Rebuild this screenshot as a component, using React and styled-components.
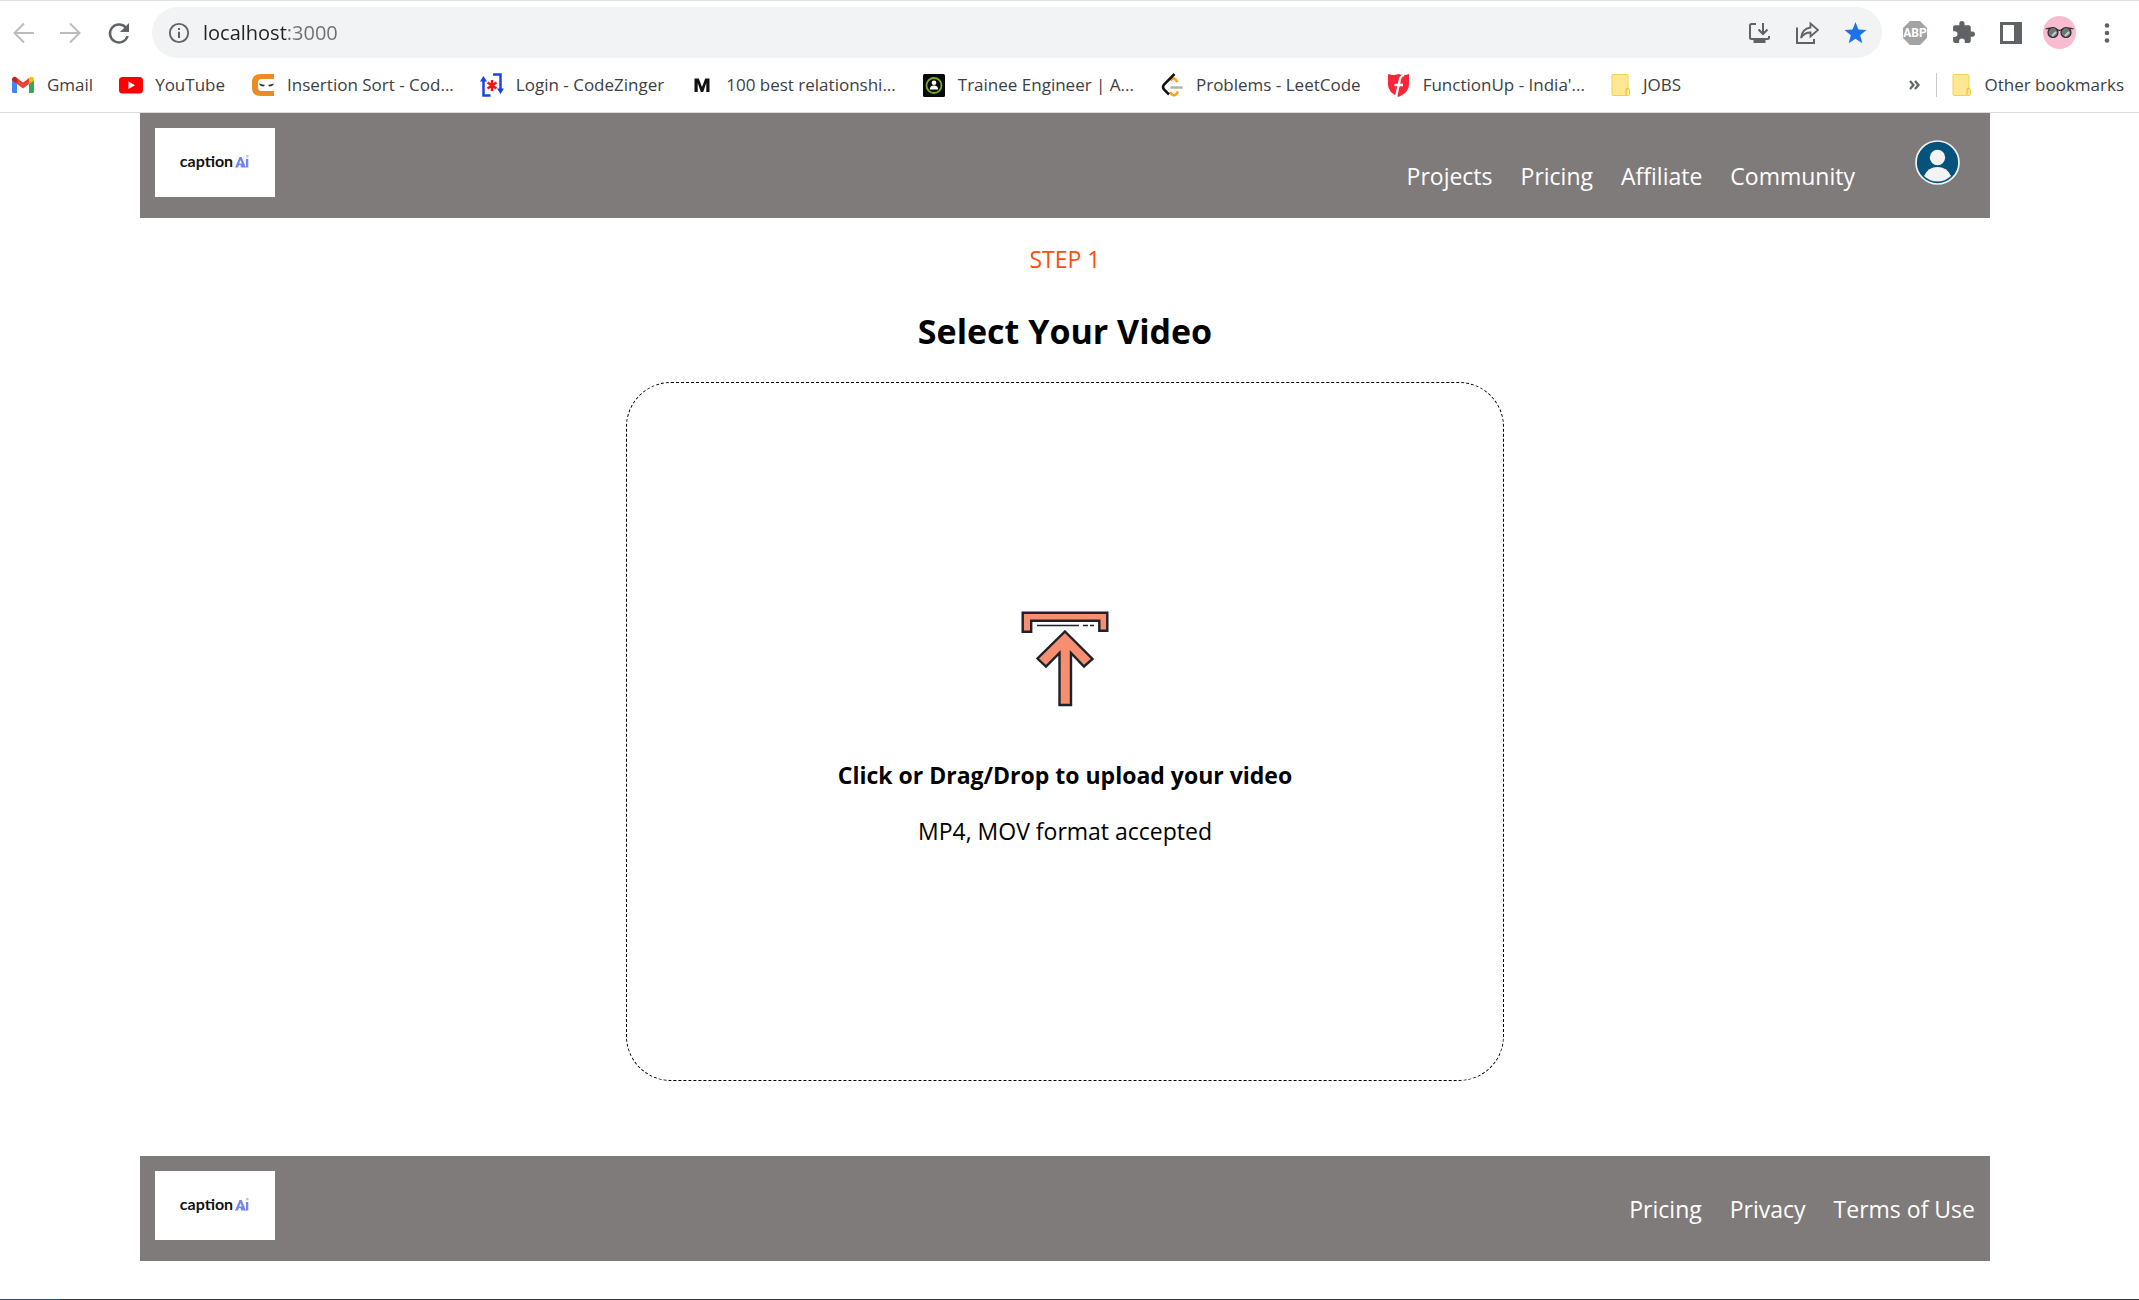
import React from "react";
import styled, { createGlobalStyle } from "styled-components";

const GlobalStyle = createGlobalStyle`
  * { box-sizing: border-box; }
  body {
    margin: 0;
    background: #fff;
    color: #000;
    font-family: "Open Sans", "Noto Sans", sans-serif;
  }
  svg { display: block; flex: none; }
`;

const Window = styled.div`
  display: flex;
  flex-direction: column;
  min-height: 100vh;
`;

/* ---------- browser chrome ---------- */

const Chrome = styled.header`
  border-top: 1px solid #dee1e6;
  border-bottom: 1px solid #dadce0;
`;

const Toolbar = styled.div`
  display: flex;
  align-items: center;
  height: 63px;
  padding: 0 20px 0 10px;
`;

const IconButton = styled.button`
  display: grid;
  place-items: center;
  flex: none;
  width: 48px;
  height: 48px;
  padding: 0;
  border: 0;
  background: none;
  color: ${(p) => (p.$muted ? "#babcbe" : "#5f6368")};
`;

const NavButtons = styled.div`
  display: flex;
  margin-left: -11px;
`;

const AddressBar = styled.div`
  display: flex;
  flex: 1;
  align-items: center;
  height: 51px;
  margin-left: 9px;
  padding: 0 3px 0 16px;
  border-radius: 26px;
  background: #f1f3f4;
  color: #5f6368;
`;

const AddressInput = styled.input`
  flex: 1;
  min-width: 0;
  margin-left: 13px;
  padding: 0;
  border: 0;
  outline: 0;
  font: 20px/28px "Open Sans", "Noto Sans", sans-serif;
  color: #202124;
  background: linear-gradient(90deg, #202124 84px, #6b6f73 84px);
  background-clip: text;
  -webkit-background-clip: text;
  -webkit-text-fill-color: transparent;
`;

const Extensions = styled.div`
  display: flex;
  margin-left: 9px;
  margin-right: -12px;
`;

const Bookmarks = styled.nav`
  display: flex;
  align-items: center;
  gap: 26px;
  height: 48px;
  padding: 0 15px 6px 11px;
`;

const Bookmark = styled.a`
  display: flex;
  align-items: center;
  gap: 12px;
  flex: none;
  color: #3c4043;
  font-size: 17px;
  line-height: 24px;
  text-decoration: none;
  white-space: nowrap;
`;

const BookmarksEnd = styled.div`
  display: flex;
  align-items: center;
  gap: 15px;
  margin-left: auto;
`;

const MoreButton = styled.button`
  padding: 0;
  border: 0;
  background: none;
  color: #5f6368;
`;

const Divider = styled.span`
  width: 1px;
  height: 24px;
  background: #c8cacd;
`;

/* ---------- page ---------- */

const Page = styled.div`
  padding: 0 149px 0 140px;
`;

const Bar = styled.div`
  display: flex;
  align-items: flex-start;
  justify-content: space-between;
  height: 105px;
  padding: 15px;
  background: #7f7b7a;
`;

const Logo = styled.a`
  display: flex;
  align-items: center;
  justify-content: center;
  gap: 2px;
  width: 120px;
  height: 69px;
  padding-bottom: 3px;
  background: #fff;
  color: #111;
  font: 700 16px/20px Lato, "Open Sans", sans-serif;
  text-decoration: none;
`;

const BarLinks = styled.nav`
  display: flex;
  gap: 28px;
  padding-top: ${(p) => (p.$low ? 32 : 22)}px;
`;

const BarLink = styled.a`
  color: #fff;
  font-size: 23px;
  line-height: 32px;
  text-decoration: none;
`;

const BarEnd = styled.div`
  display: flex;
  gap: 60px;
  padding-right: 15px;
`;

const AvatarButton = styled.button`
  display: block;
  margin-top: 12px;
  height: 45px;
  padding: 0;
  border: 0;
  background: none;
`;

const Main = styled.main`
  display: flex;
  flex-direction: column;
  align-items: center;
  padding: 25px 0 75px;
`;

const Step = styled.p`
  margin: 0;
  color: #ff4d0d;
  font-size: 23px;
  line-height: 32px;
`;

const Title = styled.h1`
  margin: 32px 0 27px;
  font-size: 34px;
  font-weight: 700;
  line-height: 48px;
`;

const DropZone = styled.label`
  display: flex;
  flex-direction: column;
  align-items: center;
  justify-content: center;
  width: 878px;
  max-width: 100%;
  height: 699px;
  padding-bottom: 5px;
  border: 1px dashed #000;
  border-radius: 45px;
`;

const FileInput = styled.input`
  position: absolute;
  width: 1px;
  height: 1px;
  opacity: 0;
`;

const DropTitle = styled.strong`
  margin-top: 52px;
  font-size: 23px;
  line-height: 32px;
`;

const DropHint = styled.span`
  margin-top: 24px;
  font-size: 23px;
  line-height: 32px;
`;

const WindowEdge = styled.div`
  height: 1px;
  margin-top: auto;
  background: linear-gradient(90deg, #1c5a86 60px, #35363a 60px);
`;

/* ---------- drawings ---------- */

const Svg = ({ size = 24, box = 24, children }) => (
  <svg width={size} height={size} viewBox={`0 0 ${box} ${box}`} fill="none" aria-hidden="true">
    {children}
  </svg>
);

const line = { stroke: "currentColor", strokeWidth: 2 };

const Back = () => <Svg><path {...line} d="M23 12H4M13 2.500 3.500 12l9.500 9.500" /></Svg>;
const Forward = () => <Svg><path {...line} d="M1 12h19M11 2.500l9.500 9.500-9.500 9.500" /></Svg>;
const Reload = () => (
  <Svg>
    <path d="M19.500 7.500A9 9 0 1 0 20.600 15" stroke="currentColor" strokeWidth="2.500" />
    <path d="M22 2v9h-9z" fill="currentColor" />
  </Svg>
);
const Info = () => (
  <Svg size={22}>
    <circle cx="12" cy="12" r="10" {...line} />
    <path d="M12 10.500V17.500M12 6.500v2.300" stroke="currentColor" strokeWidth="2.200" />
  </Svg>
);
const Install = () => (
  <Svg>
    <path {...line} d="M9 3H4.500Q3 3 3 4.500v12Q3 18 4.500 18h16q1.500 0 1.500-1.500V15" />
    <path {...line} d="M16 2v11M11.500 8.500l4.500 4.500 4.500-4.500" />
    <path d="M6.500 18h12v4h-12z" fill="currentColor" />
  </Svg>
);
const Share = () => (
  <Svg>
    <path {...line} d="M2 6.500v15.500h17V18" />
    <path stroke="currentColor" strokeWidth="1.800" d="M15.500 2.500 23 9l-7.500 6.500v-4c-5 0-7.500 2-9.500 5.500.5-5.500 3.500-9.500 9.500-10.500z" />
  </Svg>
);
const Star = () => <Svg><path fill="#1a73e8" d="M12.500 1l2.900 7.600 8.100.5-6.300 5.100 2.100 8-6.800-4.500-6.800 4.500 2.100-8L1.500 9.100l8.100-.5z" /></Svg>;
const Abp = () => (
  <Svg size={26} box={26}>
    <path fill="#a3a3a3" d="M8 1h10l7 7v10l-7 7H8l-7-7V8z" />
    <text x="13" y="17" fill="#fff" fontFamily="Roboto, sans-serif" fontSize="12" fontWeight="700" textAnchor="middle">ABP</text>
  </Svg>
);
const Puzzle = () => (
  <Svg size={25}>
    <path fill="currentColor" d="M20.500 11H19V7c0-1.100-.9-2-2-2h-4V3.500a2.500 2.500 0 0 0-5 0V5H4c-1.100 0-2 .9-2 2v3.800h1.500a2.700 2.700 0 0 1 0 5.400H2V20c0 1.100.9 2 2 2h3.800v-1.500a2.700 2.700 0 0 1 5.400 0V22H17c1.100 0 2-.9 2-2v-4h1.500a2.500 2.500 0 0 0 0-5z" />
  </Svg>
);
const SidePanel = () => (
  <Svg>
    <path fill="currentColor" fillRule="evenodd" d="M1 1h22v22H1zM4 4v16h11V4z" />
  </Svg>
);
const Profile = () => (
  <Svg size={33} box={33}>
    <circle cx="16.500" cy="16.500" r="16.500" fill="#f8bbd0" />
    <path d="M2.500 13Q9 10.500 16.500 14.500 24 10.500 30.500 13" stroke="#3a3030" strokeWidth="1.300" />
    <circle cx="10" cy="16.500" r="5" fill="#6d7678" stroke="#2f2a2a" strokeWidth="1.200" />
    <circle cx="23" cy="16.500" r="5" fill="#6d7678" stroke="#2f2a2a" strokeWidth="1.200" />
    <path d="M9 20l4-4M22 20l4-4" stroke="#c3cccc" strokeWidth="2" />
  </Svg>
);
const Dots = () => (
  <Svg>
    <circle cx="12" cy="4.500" r="2.300" fill="currentColor" />
    <circle cx="12" cy="12" r="2.300" fill="currentColor" />
    <circle cx="12" cy="19.500" r="2.300" fill="currentColor" />
  </Svg>
);

const Gmail = () => (
  <Svg>
    <path fill="#4285f4" d="M1 7l5 4v9H2.500Q1 20 1 18.500z" />
    <path fill="#34a853" d="M23 7l-5 4v9h3.500q1.500 0 1.500-1.500z" />
    <path fill="#ea4335" d="M6 5l6 4.500L18 5v6l-6 4.500L6 11z" />
    <path fill="#c5221f" d="M1 6.500C1 4 3.500 3.300 5 4.300l1 .8V11L1 7.500z" />
    <path fill="#fbbc04" d="M23 6.500c0-2.500-2.500-3.200-4-2.200l-1 .8V11l5-3.500z" />
  </Svg>
);
const YouTube = () => (
  <Svg>
    <rect y="4" width="24" height="16.500" rx="3.500" fill="#f00" />
    <path fill="#fff" d="M9.500 8.500v7.500l6.500-3.700z" />
  </Svg>
);
const CodingNinjas = () => (
  <Svg>
    <path fill="#ee8a22" d="M23 1H10Q1 1 1 9v6q0 8 9 8h13v-5H11q-4 0-4-3V9q0-3 4-3h12z" />
    <path fill="#fff" d="M7 8h16v7H7z" />
    <path fill="#333" d="M8 10.500l6 1.500-1.500 1.500Q9 13.500 8 10.500zM23 10.500 17 12l1.500 1.500Q22 13.500 23 10.500z" />
  </Svg>
);
const CodeZinger = () => (
  <Svg>
    <path d="M3.500 7v15.500h7M13 1.500h7.500V17" stroke="#1c43dd" strokeWidth="2.500" />
    <path fill="#1c43dd" d="M3.500 3 0 8.500h7zM20.500 21 17 15.500h7z" />
    <path d="M12 7v11M7.500 9.500l9 6M16.500 9.500l-9 6" stroke="#fb1010" strokeWidth="2.500" />
  </Svg>
);
const LetterM = () => <Svg><path fill="#111" d="M4.500 5.500h4.300L12 14l3.200-8.500h4.300v13.500h-3.200V10l-3.100 9h-2.400L7.700 10v9H4.500z" /></Svg>;
const Trainee = () => (
  <Svg>
    <rect x="1" y="1" width="22" height="23" rx="1.500" fill="#080808" />
    <circle cx="12" cy="12.500" r="7.500" stroke="#76ad20" strokeWidth="1.800" />
    <circle cx="12" cy="9.700" r="2.300" fill="#fff" />
    <path fill="#fff" d="M7.800 16.500Q8 12.500 12 12.500t4.200 4z" />
  </Svg>
);
const LeetCode = () => (
  <Svg>
    <path d="M10.500 7.500 12 6q1.500-1.300 3 0l2.500 3M10 19l2 2.500q2 1.500 4 0l2-3" stroke="#ffa116" strokeWidth="2.500" />
    <path d="M14.500 1 4 11.500q-2 2.500 0 5l5 5" stroke="#111" strokeWidth="2.500" />
    <path d="M10.500 14.500h12" stroke="#b3b3b3" strokeWidth="2.500" />
  </Svg>
);
const FunctionUp = () => (
  <Svg>
    <path fill="#fa2638" d="M1 1q5 2 10.500 0Q17 3 22 1v11q0 7-10.500 12Q1 19 1 12z" />
    <path d="M17 2q-4 1-4.500 6.500L9 24M7.500 12h8.500" stroke="#fff" strokeWidth="2.300" />
  </Svg>
);
const Folder = () => (
  <svg width="20" height="24" viewBox="0 0 20 24" fill="none" aria-hidden="true">
    <path fill="#ffe794" stroke="#f7cf52" d="M2 1.500h14q1 0 1 1v13q1.500 0 1.500 1.500v4.500q0 1-1 1H2q-1 0-1-1V2.500q0-1 1-1z" />
    <path stroke="#f0c43c" strokeWidth="1.300" d="M15 22v-5q0-1.500 1.500-1.500H18" />
  </svg>
);
const Chevrons = () => (
  <Svg size={12} box={12}>
    <path stroke="currentColor" strokeWidth="2.200" d="M1 2l3.500 4L1 10M6 2l3.500 4L6 10" />
  </Svg>
);

const AiMark = () => (
  <svg width="15" height="16" viewBox="0 0 15 16" aria-hidden="true">
    <path fill="#7585f5" fillRule="evenodd" d="M0 14.500 4.500 4h2.200L11 14.500H6L5.500 12H4l-1 2.500zM4.200 10.500h2.600L5.500 7z" />
    <path fill="#7585f5" d="M11 6h2.300v8.500H11z" />
    <path fill="#b9c3fb" d="M11 2h2.500v2.300H11z" />
  </svg>
);

const Avatar = () => (
  <Svg size={45} box={45}>
    <circle cx="22.500" cy="22.500" r="21.500" fill="#05527d" stroke="#f3f3f3" strokeWidth="1.700" />
    <circle cx="22.500" cy="17.500" r="7.700" fill="#f3f3f3" />
    <path fill="#f3f3f3" d="M9 36Q13 27 22.500 27T36 36Q30 41.500 22.500 41.500T9 36z" />
  </Svg>
);

const UploadIcon = () => (
  <svg width="88" height="96" viewBox="0 0 88 96" fill="none" aria-hidden="true">
    <g fill="#f68f6f" stroke="#1f212d" strokeWidth="2.400">
      <path d="M1.700 1.700h84.600v18h-8v-10H10.200v11H1.700z" />
      <path d="M44 20.500 71.500 48l-8.500 7.500L50 42v52H38.500V42L25 55.500 16.500 47.500z" />
    </g>
    <path d="M16 14.500h42M62 14.500h5M69 14.500h4" stroke="#1f212d" strokeWidth="1.600" />
  </svg>
);

const BrandLogo = () => (
  <Logo href="#home">
    caption
    <AiMark />
  </Logo>
);

const bookmarks = [
  [Gmail, "Gmail"],
  [YouTube, "YouTube"],
  [CodingNinjas, "Insertion Sort - Cod..."],
  [CodeZinger, "Login - CodeZinger"],
  [LetterM, "100 best relationshi..."],
  [Trainee, "Trainee Engineer | A..."],
  [LeetCode, "Problems - LeetCode"],
  [FunctionUp, "FunctionUp - India'..."],
  [Folder, "JOBS"],
];

export default function App() {
  return (
    <Window>
      <GlobalStyle />
      <Chrome>
        <Toolbar>
          <NavButtons>
            <IconButton $muted aria-label="Back"><Back /></IconButton>
            <IconButton $muted aria-label="Forward"><Forward /></IconButton>
            <IconButton aria-label="Reload"><Reload /></IconButton>
          </NavButtons>
          <AddressBar>
            <Info />
            <AddressInput aria-label="Address" defaultValue="localhost:3000" />
            <IconButton aria-label="Install"><Install /></IconButton>
            <IconButton aria-label="Share"><Share /></IconButton>
            <IconButton aria-label="Bookmark this page"><Star /></IconButton>
          </AddressBar>
          <Extensions>
            <IconButton aria-label="Ad blocker"><Abp /></IconButton>
            <IconButton aria-label="Extensions"><Puzzle /></IconButton>
            <IconButton aria-label="Side panel"><SidePanel /></IconButton>
            <IconButton aria-label="Profile"><Profile /></IconButton>
            <IconButton aria-label="Menu"><Dots /></IconButton>
          </Extensions>
        </Toolbar>
        <Bookmarks aria-label="Bookmarks">
          {bookmarks.map(([Icon, label]) => (
            <Bookmark href="#bookmark" key={label}>
              <Icon />
              {label}
            </Bookmark>
          ))}
          <BookmarksEnd>
            <MoreButton aria-label="More bookmarks"><Chevrons /></MoreButton>
            <Divider />
            <Bookmark href="#other"><Folder />Other bookmarks</Bookmark>
          </BookmarksEnd>
        </Bookmarks>
      </Chrome>
      <Page>
        <Bar>
          <BrandLogo />
          <BarEnd>
            <BarLinks $low aria-label="Main">
              <BarLink href="#projects">Projects</BarLink>
              <BarLink href="#pricing">Pricing</BarLink>
              <BarLink href="#affiliate">Affiliate</BarLink>
              <BarLink href="#community">Community</BarLink>
            </BarLinks>
            <AvatarButton aria-label="Account"><Avatar /></AvatarButton>
          </BarEnd>
        </Bar>
        <Main>
          <Step>STEP 1</Step>
          <Title>Select Your Video</Title>
          <DropZone>
            <FileInput type="file" accept=".mp4,.mov" />
            <UploadIcon />
            <DropTitle>Click or Drag/Drop to upload your video</DropTitle>
            <DropHint>MP4, MOV format accepted</DropHint>
          </DropZone>
        </Main>
        <Bar as="footer">
          <BrandLogo />
          <BarLinks aria-label="Footer">
            <BarLink href="#pricing">Pricing</BarLink>
            <BarLink href="#privacy">Privacy</BarLink>
            <BarLink href="#terms">Terms of Use</BarLink>
          </BarLinks>
        </Bar>
      </Page>
      <WindowEdge />
    </Window>
  );
}
